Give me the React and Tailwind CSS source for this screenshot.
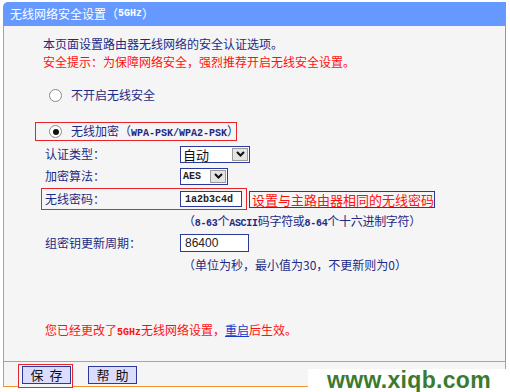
import React from 'react';

const navy = 'text-[#1c2a86]';

const Radio = ({ checked }) => (
  <span className="w-[13px] h-[13px] rounded-full border border-[#8a8a8a] bg-white flex items-center justify-center shrink-0">
    {checked && <span className="w-[6px] h-[6px] rounded-full bg-[#111]" />}
  </span>
);

const Chevron = () => (
  <svg width="9" height="6" viewBox="0 0 9 6">
    <polyline points="1,1 4.5,4.5 8,1" fill="none" stroke="#111" strokeWidth="2" />
  </svg>
);

const Select = ({ value, width, mono }) => (
  <div className={`h-[17px] border border-[#2b3a9a] bg-white flex items-center justify-between pl-[2px] pr-[1px] ${width}`}>
    <span className={mono ? "font-['Liberation_Mono',monospace] font-bold text-[10px] text-[#222]" : 'text-[13px] text-[#111] leading-[15px]'}>
      {value}
    </span>
    <span className="w-[16px] h-[13px] bg-[#e4e4e4] border border-[#9a9a9a] flex items-center justify-center">
      <Chevron />
    </span>
  </div>
);

const Mono = ({ children }) => (
  <span className="font-['Liberation_Mono',monospace] font-bold text-[10px]">{children}</span>
);

export default function App() {
  return (
    <div className="relative w-[510px] h-[392px] bg-white overflow-hidden pt-[2px] pl-[3px] font-['Noto_Sans_CJK_SC','Liberation_Sans',sans-serif] text-[12px]">
      <div className="w-[503px]">
        {/* Header */}
        <div className="h-[24px] bg-[#6699ff] rounded-tl-[5px] flex items-center pl-[7px] text-white leading-[24px]">
          无线网络安全设置（<Mono>5GHz</Mono>）
        </div>

        {/* Body */}
        <div className="h-[335px] bg-[#f5f5f5] border-l border-r border-l-[#f3922c] border-r-[#ff7a10] pt-[9px]">
          <div className={`ml-[39px] h-[18px] leading-[18px] ${navy}`}>本页面设置路由器无线网络的安全认证选项。</div>
          <div className="ml-[39px] h-[18px] leading-[18px] text-[#ff1010]">安全提示：为保障网络安全，强烈推荐开启无线安全设置。</div>

          <div className={`mt-[15px] ml-[45px] h-[18px] flex items-center gap-[9px] ${navy}`}>
            <Radio />
            <span className="text-[12px] leading-[18px]">不开启无线安全</span>
          </div>

          <div className={`mt-[18px] ml-[31px] w-[202px] h-[19px] border border-[#e8242a] flex items-center pl-[13px] gap-[9px] ${navy}`}>
            <Radio checked />
            <span className="text-[12px] leading-[17px] whitespace-nowrap">
              无线加密（<Mono>WPA-PSK/WPA2-PSK</Mono>）
            </span>
          </div>

          <div className={`mt-[4px] ml-[41px] h-[18px] flex items-center ${navy}`}>
            <span className="w-[135px] text-[12px]">认证类型：</span>
            <Select value="自动" width="w-[70px]" />
          </div>

          <div className={`mt-[4px] ml-[41px] h-[18px] flex items-center ${navy}`}>
            <span className="w-[135px] text-[12px]">加密算法：</span>
            <Select value="AES" width="w-[48px]" mono />
          </div>

          <div className="mt-[3px] ml-[37px] h-[22px] flex items-center">
            <div className={`w-[206px] h-[22px] border border-[#e8242a] flex items-center pl-[3px] ${navy}`}>
              <span className="w-[135px] text-[12px]">无线密码：</span>
              <div className="w-[62px] h-[16px] border border-[#2b3a9a] bg-white flex items-center pl-[4px] font-['Liberation_Mono',monospace] font-bold text-[10px] text-[#222]">
                1a2b3c4d
              </div>
            </div>
            <div className="ml-[2px] h-[17px] w-[186px] border border-[#2b3a9a] flex items-center pl-[2px] text-[13px] text-[#ff1010] leading-[15px]">
              设置与主路由器相同的无线密码
            </div>
          </div>

          <div className={`mt-[2px] ml-[179px] h-[18px] leading-[18px] whitespace-nowrap tracking-[-0.3px] ${navy}`}>
            （<Mono>8-63</Mono>个<Mono>ASCII</Mono>码字符或<Mono>8-64</Mono>个十六进制字符）
          </div>

          <div className={`mt-[4px] ml-[41px] h-[18px] flex items-center ${navy}`}>
            <span className="w-[135px] text-[12px]">组密钥更新周期：</span>
            <div className="w-[69px] h-[18px] border border-[#2b3a9a] bg-white flex items-center pl-[4px] text-[12px] text-[#222] font-['Liberation_Sans',sans-serif]">
              86400
            </div>
          </div>

          <div className={`mt-[4px] ml-[179px] h-[18px] leading-[18px] whitespace-nowrap ${navy}`}>
            （单位为秒，最小值为30，不更新则为0）
          </div>

          <div className="mt-[47px] ml-[41px] h-[18px] leading-[18px] text-[#ff1010] whitespace-nowrap">
            您已经更改了<Mono>5GHz</Mono>无线网络设置，
            <span className="text-[#1a3acc] underline">重启</span>后生效。
          </div>
        </div>

        {/* Footer */}
        <div className="h-[26px] bg-[#f5f5f5] border border-[#f3922c] flex items-start pl-[14px] pt-[2px]">
          <div className="h-[24px] border border-[#e8242a] pl-[3px] pr-[1px] pt-[1px] bg-[#f5f5f5]">
            <button className="w-[49px] h-[18px] bg-[#dcdcff] border border-[#2b3a9a] text-[13px] leading-[16px] text-[#111] tracking-[6px] pl-[6px]">
              保存
            </button>
          </div>
          <button className="ml-[15px] mt-[2px] w-[49px] h-[18px] bg-[#dcdcff] border border-[#2b3a9a] text-[13px] leading-[16px] text-[#111] tracking-[6px] pl-[6px]">
            帮助
          </button>
        </div>
      </div>

      {/* Watermark */}
      <div className="absolute left-[308px] top-[369px] w-[202px] h-[23px] bg-white flex items-center justify-center">
        <span className="font-['Liberation_Sans',sans-serif] font-black text-[23px] leading-[23px] text-[#3b7b2e] tracking-[0.3px]">www.xiqb.com</span>
      </div>
    </div>
  );
}
